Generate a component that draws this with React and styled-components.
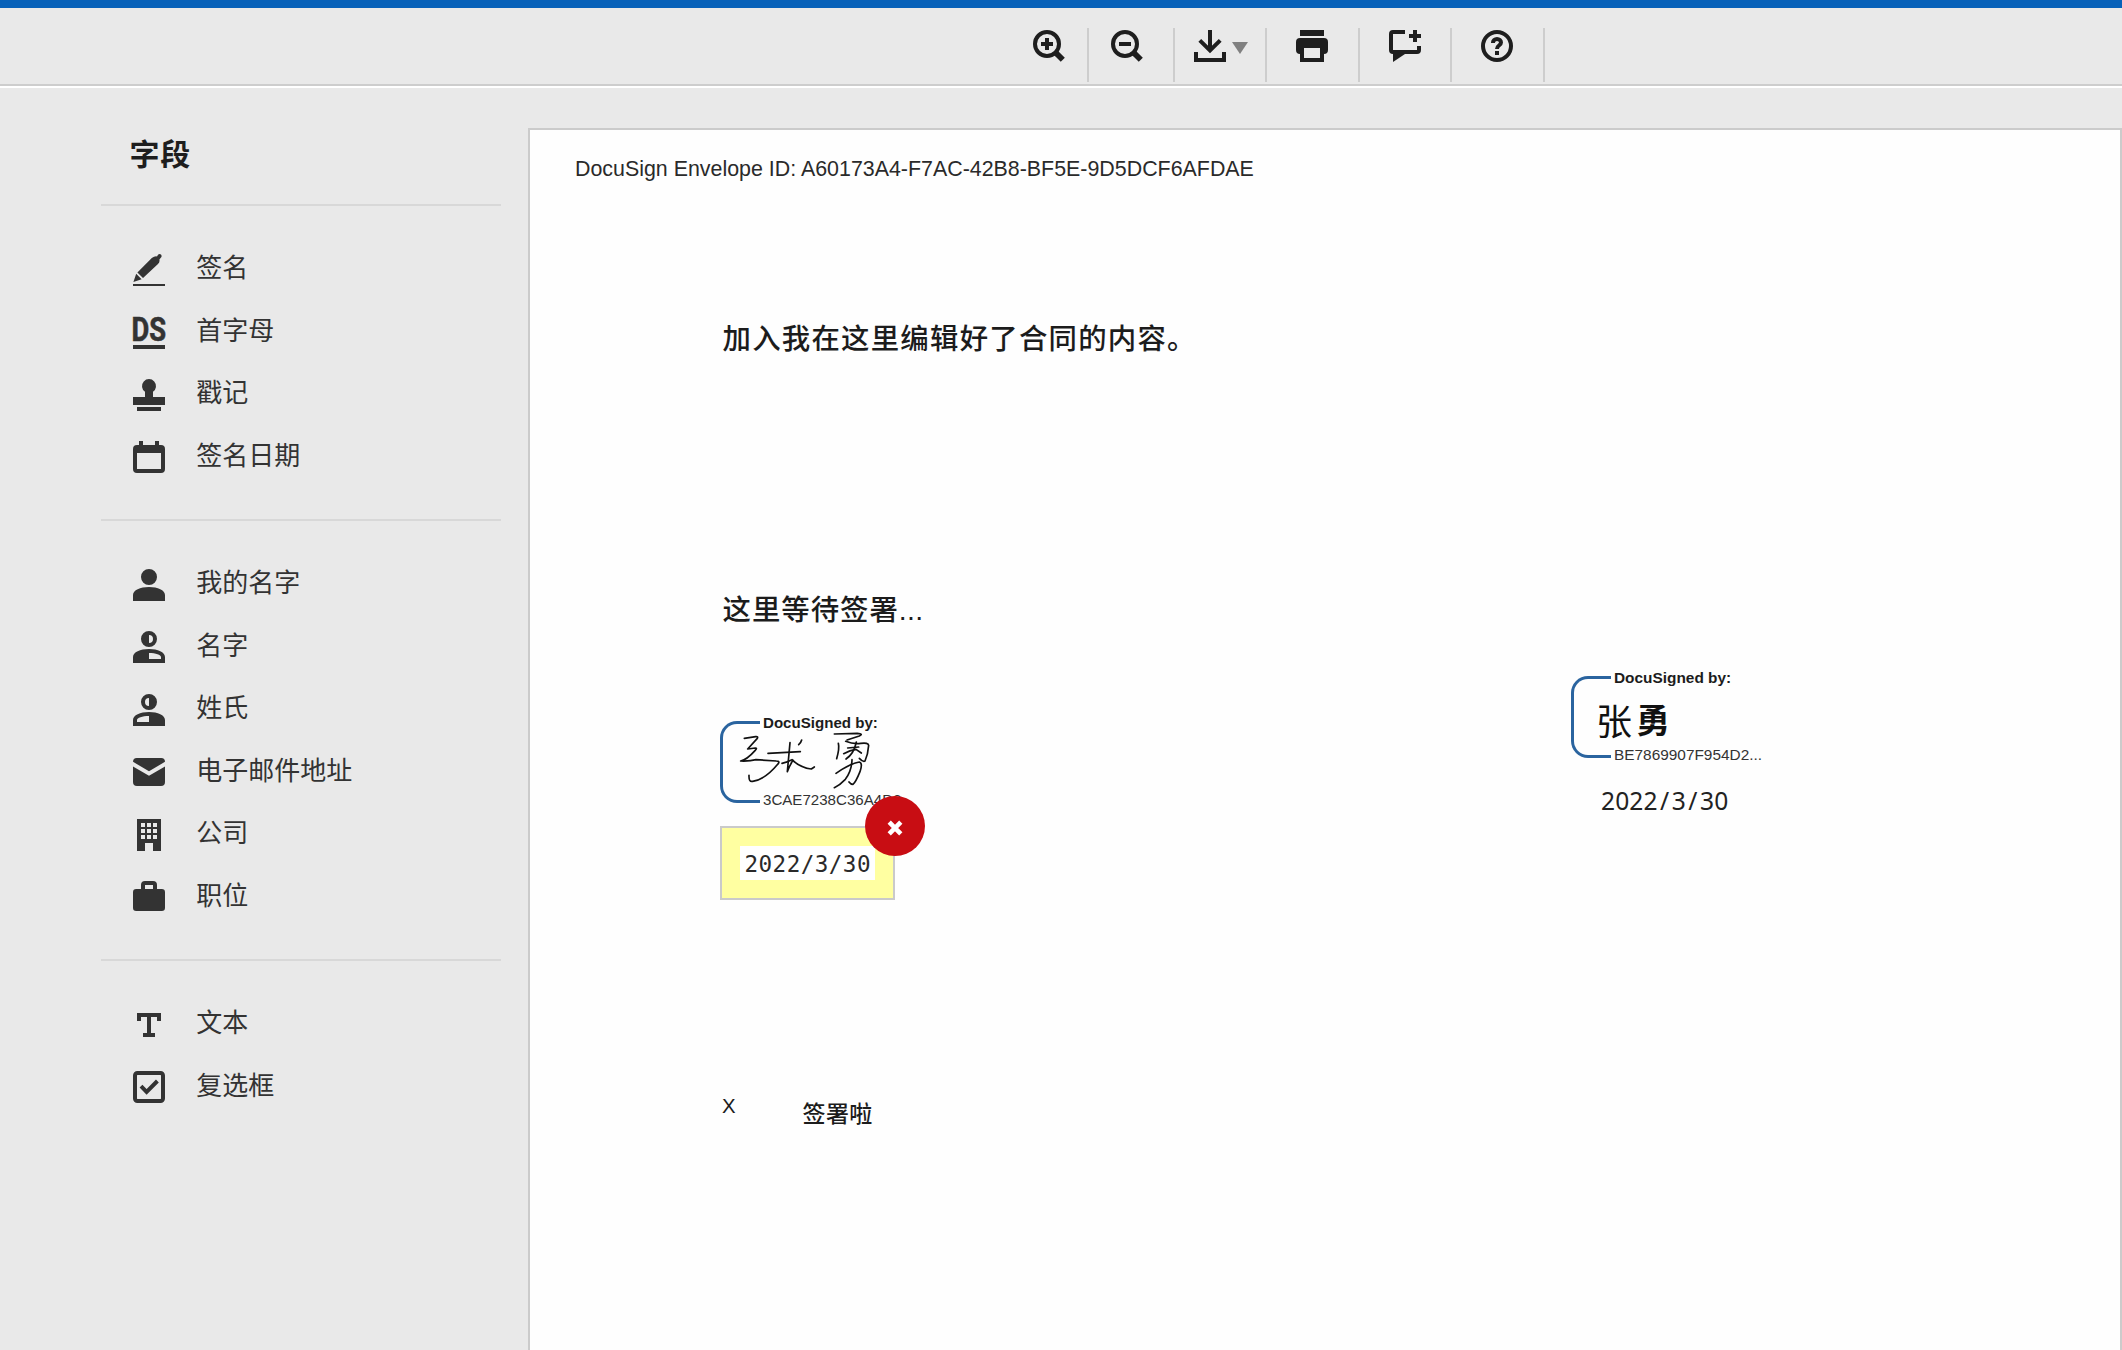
import React from "react";
import styled, { createGlobalStyle } from "styled-components";

const GlobalStyle = createGlobalStyle`
  *, *::before, *::after { box-sizing: border-box; }
  html, body, #root { height: 100%; margin: 0; }
  body {
    overflow: hidden;
    background: #e9e9e9;
    font-family: "Liberation Sans", "Noto Sans CJK SC", sans-serif;
    color: #333;
  }
`;

const Shell = styled.div`
  display: flex;
  flex-direction: column;
  height: 100vh;
  overflow: hidden;
  background: #e9e9e9;
`;

const Toolbar = styled.header`
  flex: none;
  display: flex;
  height: 88px;
  padding: 20px 0 0 991px;
  border-top: 8px solid #0761b9;
  border-bottom: 2px solid #fff;
  box-shadow: inset 0 -2px 0 #cdcdcd;
`;

const ToolButton = styled.button`
  display: flex;
  align-items: flex-start;
  gap: 6px;
  width: ${(p) => p.$width}px;
  height: 54px;
  padding: 2px 0 0 ${(p) => p.$inset}px;
  border: 0;
  border-right: 2px solid #cdcdcd;
  background: none;
  color: #1e1e1e;
`;

const Caret = styled.span`
  margin-top: 12px;
  border-top: 12px solid #808080;
  border-left: 8px solid transparent;
  border-right: 8px solid transparent;
`;

const Glyph = styled.svg`
  display: block;
  flex: none;
  width: 32px;
  height: 32px;
  fill: currentColor;
  overflow: visible;
`;

const Body = styled.main`
  flex: 1;
  display: flex;
  min-height: 0;
`;

const Sidebar = styled.aside`
  flex: none;
  width: 400px;
  margin-left: 101px;
`;

const SidebarTitle = styled.h2`
  height: 116px;
  margin: 0;
  padding: 42px 0 0 28.5px;
  font: 700 30px/44px "Noto Sans CJK SC", sans-serif;
  letter-spacing: 0.8px;
  color: #1e1e1e;
`;

const FieldGroup = styled.ul`
  margin: 0;
  padding: 32.6px 0 30.4px 32.2px;
  border-top: 2px solid #d8d8d8;
  list-style: none;
`;

const FieldItem = styled.li`
  display: flex;
  align-items: center;
  gap: 31px;
  height: 62.5px;
`;

const FieldLabel = styled.span`
  padding-bottom: 7px;
  font: 400 26px/40px "Noto Sans CJK SC", sans-serif;
  color: #333;
`;

const Page = styled.section`
  flex: none;
  width: 1594px;
  height: 1300px;
  margin: 40px 0 0 27px;
  border: 2px solid #cbcbcb;
  background: #fefefe;
  color: #1c1c1c;
`;

const EnvelopeId = styled.p`
  margin: 0;
  padding: 26px 0 0 45px;
  font-size: 21.4px;
  line-height: 26px;
  white-space: nowrap;
  color: #2a2a2a;
`;

const Paragraph = styled.p`
  margin: ${(p) => p.$top}px 0 0 192.5px;
  font: 500 28.4px/44px "Liberation Sans", "Noto Sans CJK SC", sans-serif;
  letter-spacing: ${(p) => p.$spacing}px;
  white-space: nowrap;
`;

const Ellipsis = styled.span`
  letter-spacing: 0.3px;
`;

const Signers = styled.div`
  display: flex;
  align-items: flex-start;
  justify-content: space-between;
  width: 1059px;
  height: 236px;
  margin: 38px 0 0 190px;
`;

const Signer = styled.div`
  width: 208px;
  margin-top: ${(p) => p.$top}px;
`;

const Stamp = styled.div`
  display: grid;
  grid-template-columns: 43px 1fr;
  grid-template-rows: 18px 59px 18px;
  height: 95px;
  white-space: nowrap;
`;

const Bracket = styled.span`
  grid-column: 1;
  grid-row: 1 / 4;
  width: 40px;
  height: 82px;
  margin-top: 7px;
  border: 3px solid #2a649f;
  border-right: 0;
  border-radius: 17px 0 0 17px;
`;

const StampHeading = styled.strong`
  grid-column: 2;
  grid-row: 1;
  font-size: ${(p) => p.$size}px;
  line-height: 18px;
`;

const StampMark = styled.div`
  grid-column: 1 / 3;
  grid-row: 2;
  padding-left: ${(p) => p.$left}px;
`;

const StampId = styled.span`
  grid-column: 2;
  grid-row: 3;
  font-size: ${(p) => p.$size}px;
  line-height: 18px;
  color: #333;
`;

const Handwriting = styled.svg`
  display: block;
  width: 140px;
  height: 62px;
  margin-top: -3px;
  overflow: visible;
  fill: none;
  stroke: #111;
  stroke-width: 5;
  stroke-linecap: round;
  stroke-linejoin: round;
`;

const TypedName = styled.div`
  display: flex;
  gap: 4px;
  padding-top: 5px;
  font: 400 36px/54px "Noto Sans CJK SC", sans-serif;
  color: #111;
`;

const GivenName = styled.b`
  font-size: 34px;
  font-weight: 700;
`;

const DateField = styled.div`
  position: relative;
  width: 175px;
  height: 74px;
  margin-top: 17px;
  padding: 18px;
  border: 2px solid #cacaca;
  background: #ffffa1;
`;

const DateValue = styled.div`
  width: 135px;
  height: 34px;
  padding-left: 4.5px;
  background: #fff;
  font: 400 22.6px/36px "DejaVu Sans Mono", monospace;
  letter-spacing: 0.45px;
  color: #2a2a2a;
`;

const RemoveButton = styled.button`
  position: absolute;
  top: -32px;
  right: -32px;
  display: flex;
  align-items: center;
  justify-content: center;
  width: 60px;
  height: 60px;
  padding: 4px 0 0;
  border: 0;
  border-radius: 50%;
  background: #c80d13;
  color: #fff;
`;

const Cross = styled.svg`
  width: 14px;
  height: 14px;
  overflow: visible;
  stroke: currentColor;
  stroke-width: 4.6;
`;

const SignedDate = styled.div`
  display: flex;
  margin: 20px 0 0 30px;
  font: 400 24.6px/34px "Noto Sans", sans-serif;
  color: #222;
`;

const DateCell = styled.span`
  width: 14.15px;
  text-align: center;
`;

const CheckLine = styled.div`
  display: flex;
  align-items: flex-start;
  margin: 188px 0 0 192px;
`;

const CheckMark = styled.span`
  width: 80.5px;
  font-size: 20.4px;
  line-height: 24px;
`;

const CheckText = styled.span`
  font: 500 23px/36px "Noto Sans CJK SC", sans-serif;
  letter-spacing: 0.4px;
`;

const line = { fill: "none", stroke: "currentColor", strokeWidth: 2 };

const shapes = {
  zoomIn: (
    <>
      <circle cx="7" cy="7" r="6" {...line} />
      <path d="M4 6h2V4h2v2h2v2H8v2H6V8H4z" />
      <path d="M11 11l3.9 3.9" {...line} strokeWidth={2.9} />
    </>
  ),
  zoomOut: (
    <>
      <circle cx="7" cy="7" r="6" {...line} />
      <path d="M4 6h6v2H4z" />
      <path d="M11 11l3.9 3.9" {...line} strokeWidth={2.9} />
    </>
  ),
  download: (
    <>
      <path d="M0 11h2v3h12v-3h2v5H0z" />
      <path d="M8 0v10M2.9 5.2L8 10.2l5.1-5" {...line} />
    </>
  ),
  print: (
    <path
      fillRule="evenodd"
      d="M2 0h12v3H2zM2 4h12a2 2 0 0 1 2 2v4a2 2 0 0 1-2 2v4H2v-4a2 2 0 0 1-2-2V6a2 2 0 0 1 2-2zM4 9v5h8V9z"
    />
  ),
  comment: (
    <path d="M2 0h6v2H2v8h12V8h2v2a2 2 0 0 1-2 2H8l-6 4v-4a2 2 0 0 1-2-2V2a2 2 0 0 1 2-2zM12 0h2v2h2v2h-2v2h-2V4h-2V2h2z" />
  ),
  help: (
    <>
      <circle cx="8" cy="8" r="7" {...line} />
      <path d="M6 6.5V6.3a2 1.8 0 0 1 4 0C10 7.7 8 7.6 8 9.5" {...line} />
      <path d="M7 10.5h2v2H7z" />
    </>
  ),
  pen: (
    <path d="M0 15h16v1H0zM.2 14l1.4-4.1 2.7 2.7zM2.2 9.2L9.4 2Q10.9.9 12 1.2l.5-.8Q13.2-.3 14 .3q.6.8 0 1.5l-.8 1q.3 1.2-.7 2.2L5 12z" />
  ),
  initials: (
    <>
      <text
        x="-0.8"
        y="12.4"
        textLength="17.3"
        lengthAdjust="spacingAndGlyphs"
        fontFamily="Roboto, sans-serif"
        fontWeight="700"
        fontSize="16.2"
        stroke="currentColor"
        strokeWidth="0.3"
      >
        DS
      </text>
      <path d="M0 14.5h16v2H0z" />
    </>
  ),
  stamp: (
    <path d="M6 9V6.4A3.5 3.5 0 1 1 10 6.4V9h6v4H0V9zM2 14h12v2H2z" />
  ),
  calendar: (
    <path
      fillRule="evenodd"
      d="M3 0h2v2h6V0h2v2h1a2 2 0 0 1 2 2v10a2 2 0 0 1-2 2H2a2 2 0 0 1-2-2V4a2 2 0 0 1 2-2h1zM2 6v8h12V6z"
    />
  ),
  person: (
    <path d="M8 0a4 4 0 1 1 0 8 4 4 0 0 1 0-8zM0 16v-3c0-2.5 3.6-4 8-4s8 1.5 8 4v3z" />
  ),
  firstName: (
    <path
      fillRule="evenodd"
      d="M8 0a4 4 0 1 1 0 8 4 4 0 0 1 0-8zM8 2v4a2 2 0 0 0 0-4zM0 16v-3c0-2.5 3.6-4 8-4s8 1.5 8 4v3zM8 11v3h6v-1c0-1-2.6-2-6-2z"
    />
  ),
  lastName: (
    <path
      fillRule="evenodd"
      d="M8 0a4 4 0 1 1 0 8 4 4 0 0 1 0-8zM8 2v4a2 2 0 0 1 0-4zM0 16v-3c0-2.5 3.6-4 8-4s8 1.5 8 4v3zM8 11v3H2v-1c0-1 2.6-2 6-2z"
    />
  ),
  mail: (
    <path d="M0 2.9A1.9 1.9 0 0 1 1.9 1h12.2A1.9 1.9 0 0 1 16 2.9L8 7.6zM0 5.2l8 4.7 8-4.7V13a2 2 0 0 1-2 2H2a2 2 0 0 1-2-2z" />
  ),
  company: (
    <path
      fillRule="evenodd"
      d="M2 0h12v16h-4v-4H6v4H2zM4 2v2h2V2zM7 2v2h2V2zM10 2v2h2V2zM4 5v2h2V5zM7 5v2h2V5zM10 5v2h2V5zM4 8v2h2V8zM7 8v2h2V8zM10 8v2h2V8z"
    />
  ),
  job: (
    <path
      fillRule="evenodd"
      d="M4 4V2a2 2 0 0 1 2-2h4a2 2 0 0 1 2 2v2h2.4A1.6 1.6 0 0 1 16 5.6v7.8a1.6 1.6 0 0 1-1.6 1.6H1.6A1.6 1.6 0 0 1 0 13.4V5.6A1.6 1.6 0 0 1 1.6 4zM6 2v2h4V2z"
    />
  ),
  textBox: <path d="M2 2h12v4h-2V4H9v8h2v2H5v-2h2V4H4v2H2z" />,
  checkbox: (
    <>
      <rect x="1" y="1" width="14" height="14" rx="1.2" {...line} />
      <path d="M4 7.6l2.8 2.8 5.4-5.4" {...line} />
    </>
  ),
};

const Icon = ({ name }) => (
  <Glyph viewBox="0 0 16 16" aria-hidden="true">
    {shapes[name]}
  </Glyph>
);

const tools = [
  { icon: "zoomIn", width: 98, inset: 42 },
  { icon: "zoomOut", width: 86, inset: 22 },
  { icon: "download", width: 92, inset: 19, caret: true },
  { icon: "print", width: 93, inset: 29 },
  { icon: "comment", width: 92, inset: 29 },
  { icon: "help", width: 93, inset: 29 },
];

const groups = [
  [
    ["pen", "签名"],
    ["initials", "首字母"],
    ["stamp", "戳记"],
    ["calendar", "签名日期"],
  ],
  [
    ["person", "我的名字"],
    ["firstName", "名字"],
    ["lastName", "姓氏"],
    ["mail", "电子邮件地址"],
    ["company", "公司"],
    ["job", "职位"],
  ],
  [
    ["textBox", "文本"],
    ["checkbox", "复选框"],
  ],
];

const penStrokes = [
  "M133 502L167 497Q175 496 172 502L143 534L166 531Q173 531 165 539Q141 566 122 570Q150 571 168 566L229 570Q242 570 233 580Q195 626 158 631Q146 634 147 613",
  "M204 547L301 542",
  "M305 507Q303 515 296 521",
  "M270 515L264 580L262 602Q269 583 279 568",
  "M246 577Q262 573 276 566Q300 590 334 594L343 588",
  "M403 489L472 487Q492 488 478 495L441 507",
  "M415 517Q419 532 410 563",
  "M437 511Q460 520 482 517Q505 514 506 523Q504 550 495 570Q489 574 478 562",
  "M443 531L476 528M431 548Q450 538 468 535L484 546",
  "M469 513Q462 548 438 564",
  "M408 607Q450 578 478 573Q489 576 480 602Q467 634 459 640Q452 640 447 633",
  "M456 566Q455 600 436 625Q420 642 403 650",
];

export default function App() {
  return (
    <>
      <GlobalStyle />
      <Shell>
        <Toolbar>
          {tools.map((t) => (
            <ToolButton key={t.icon} $width={t.width} $inset={t.inset}>
              <Icon name={t.icon} />
              {t.caret && <Caret />}
            </ToolButton>
          ))}
        </Toolbar>
        <Body>
          <Sidebar>
            <SidebarTitle>字段</SidebarTitle>
            {groups.map((items, i) => (
              <FieldGroup key={i}>
                {items.map(([icon, label]) => (
                  <FieldItem key={icon}>
                    <Icon name={icon} />
                    <FieldLabel>{label}</FieldLabel>
                  </FieldItem>
                ))}
              </FieldGroup>
            ))}
          </Sidebar>
          <Page>
            <EnvelopeId>
              DocuSign Envelope ID: A60173A4-F7AC-42B8-BF5E-9D5DCF6AFDAE
            </EnvelopeId>
            <Paragraph $top={135} $spacing={1.25}>
              加入我在这里编辑好了合同的内容。
            </Paragraph>
            <Paragraph $top={227} $spacing={1}>
              这里等待签署<Ellipsis>...</Ellipsis>
            </Paragraph>
            <Signers>
              <Signer $top={44}>
                <Stamp>
                  <Bracket />
                  <StampHeading $size={15.1}>DocuSigned by:</StampHeading>
                  <StampMark $left={15}>
                    <Handwriting viewBox="105 474 420 186">
                      {penStrokes.map((d) => (
                        <path key={d} d={d} />
                      ))}
                    </Handwriting>
                  </StampMark>
                  <StampId $size={15.1}>3CAE7238C36A4D2...</StampId>
                </Stamp>
                <DateField>
                  <DateValue>2022/3/30</DateValue>
                  <RemoveButton>
                    <Cross viewBox="0 0 14 14">
                      <path d="M1.2 1.2l11.6 11.6M12.8 1.2L1.2 12.8" />
                    </Cross>
                  </RemoveButton>
                </DateField>
              </Signer>
              <Signer $top={-1}>
                <Stamp>
                  <Bracket />
                  <StampHeading $size={15.4}>DocuSigned by:</StampHeading>
                  <StampMark $left={25}>
                    <TypedName>
                      张<GivenName>勇</GivenName>
                    </TypedName>
                  </StampMark>
                  <StampId $size={15.4}>BE7869907F954D2...</StampId>
                </Stamp>
                <SignedDate>
                  {[..."2022/3/30"].map((c, i) => (
                    <DateCell key={i}>{c}</DateCell>
                  ))}
                </SignedDate>
              </Signer>
            </Signers>
            <CheckLine>
              <CheckMark>X</CheckMark>
              <CheckText>签署啦</CheckText>
            </CheckLine>
          </Page>
        </Body>
      </Shell>
    </>
  );
}
